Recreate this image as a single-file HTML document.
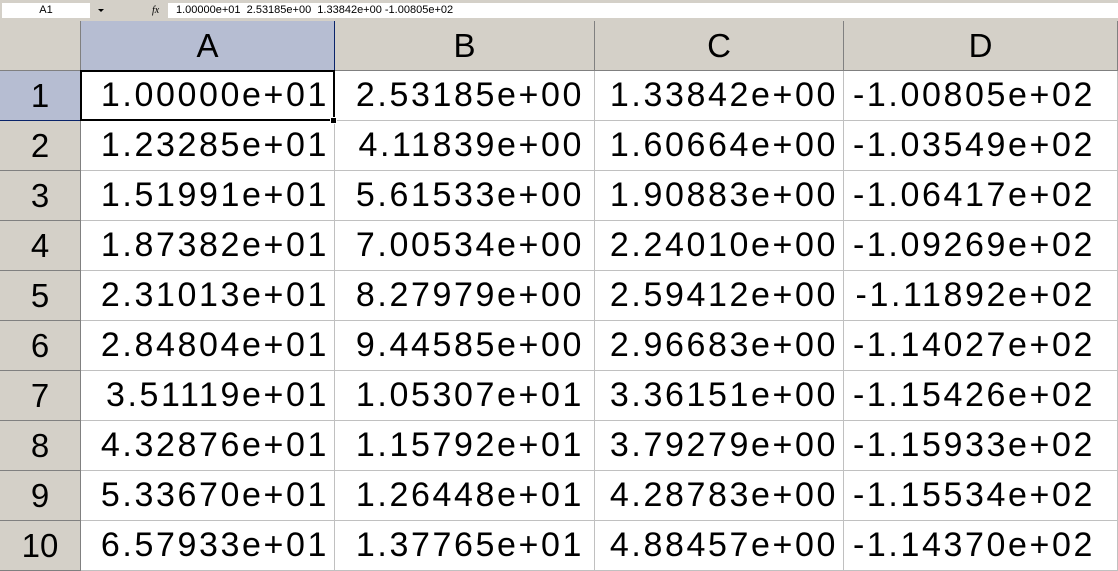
<!DOCTYPE html>
<html><head><style>
body{margin:0;width:1118px;height:571px;overflow:hidden;background:#fff;font-family:"Liberation Sans",Arial,sans-serif;position:relative}
.bar{position:absolute;left:0;top:0;width:1118px;height:21px;background:#d4d0c8}
.nb{position:absolute;left:2px;top:3px;width:88px;height:15px;background:#fff;font-size:11px;line-height:15px;text-align:center}
.dd{position:absolute;left:98px;top:9px;width:0;height:0;border-left:3px solid transparent;border-right:3px solid transparent;border-top:3px solid #000}
.fx{position:absolute;left:152px;top:3px;font-size:10px;font-style:italic;font-family:"Liberation Serif",serif;line-height:15px}
.fb{position:absolute;left:168px;top:3px;right:0;height:15px;background:#fff;font-size:11px;line-height:15px;padding-left:8px;white-space:pre}
.c{position:absolute;box-sizing:border-box;height:50px;border-right:1px solid #c0c0c0;border-bottom:1px solid #c0c0c0;font-size:34px;line-height:49px;text-align:right;white-space:nowrap;letter-spacing:2.6px}
.h{background:#d4d0c8;border-color:#808080;text-align:center;letter-spacing:0;font-size:33px}
.s{background:#b6bdd2;border-color:#0a246a}
.sel{position:absolute;left:80px;top:70px;width:251px;height:47px;border:2px solid #000}
.hnd{position:absolute;left:330px;top:117px;width:5px;height:5px;background:#000;border:1px solid #fff}
</style></head><body>
<div class="bar"><div class="nb">A1</div><div class="dd"></div><div class="fx">fx</div><div class="fb">1.00000e+01  2.53185e+00  1.33842e+00 -1.00805e+02</div></div>
<div id="g"></div>
<script>
var d=[["1.00000e+01","2.53185e+00","1.33842e+00","-1.00805e+02"],["1.23285e+01","4.11839e+00","1.60664e+00","-1.03549e+02"],["1.51991e+01","5.61533e+00","1.90883e+00","-1.06417e+02"],["1.87382e+01","7.00534e+00","2.24010e+00","-1.09269e+02"],["2.31013e+01","8.27979e+00","2.59412e+00","-1.11892e+02"],["2.84804e+01","9.44585e+00","2.96683e+00","-1.14027e+02"],["3.51119e+01","1.05307e+01","3.36151e+00","-1.15426e+02"],["4.32876e+01","1.15792e+01","3.79279e+00","-1.15933e+02"],["5.33670e+01","1.26448e+01","4.28783e+00","-1.15534e+02"],["6.57933e+01","1.37765e+01","4.88457e+00","-1.14370e+02"]];
var xs=[0,81,335,595,844,1118],pr=[0,5,10,5,22],h="";
function cell(x,w,y,cls,t,p){h+='<div class="c '+cls+'" style="left:'+x+'px;top:'+y+'px;width:'+w+'px;padding-right:'+p+'px">'+t+'</div>';}
cell(0,81,21,"h","",0);
"ABCD".split("").forEach(function(L,i){cell(xs[i+1],xs[i+2]-xs[i+1],21,"h"+(i==0?" s":""),L,0);});
for(var r=0;r<10;r++){var y=71+50*r;cell(0,81,y,"h"+(r==0?" s":""),r+1,0);
for(var c=0;c<4;c++)cell(xs[c+1],xs[c+2]-xs[c+1],y,"",d[r][c],pr[c+1]);}
document.getElementById("g").innerHTML=h;
</script>
<div class="sel"></div><div class="hnd"></div>
</body></html>
